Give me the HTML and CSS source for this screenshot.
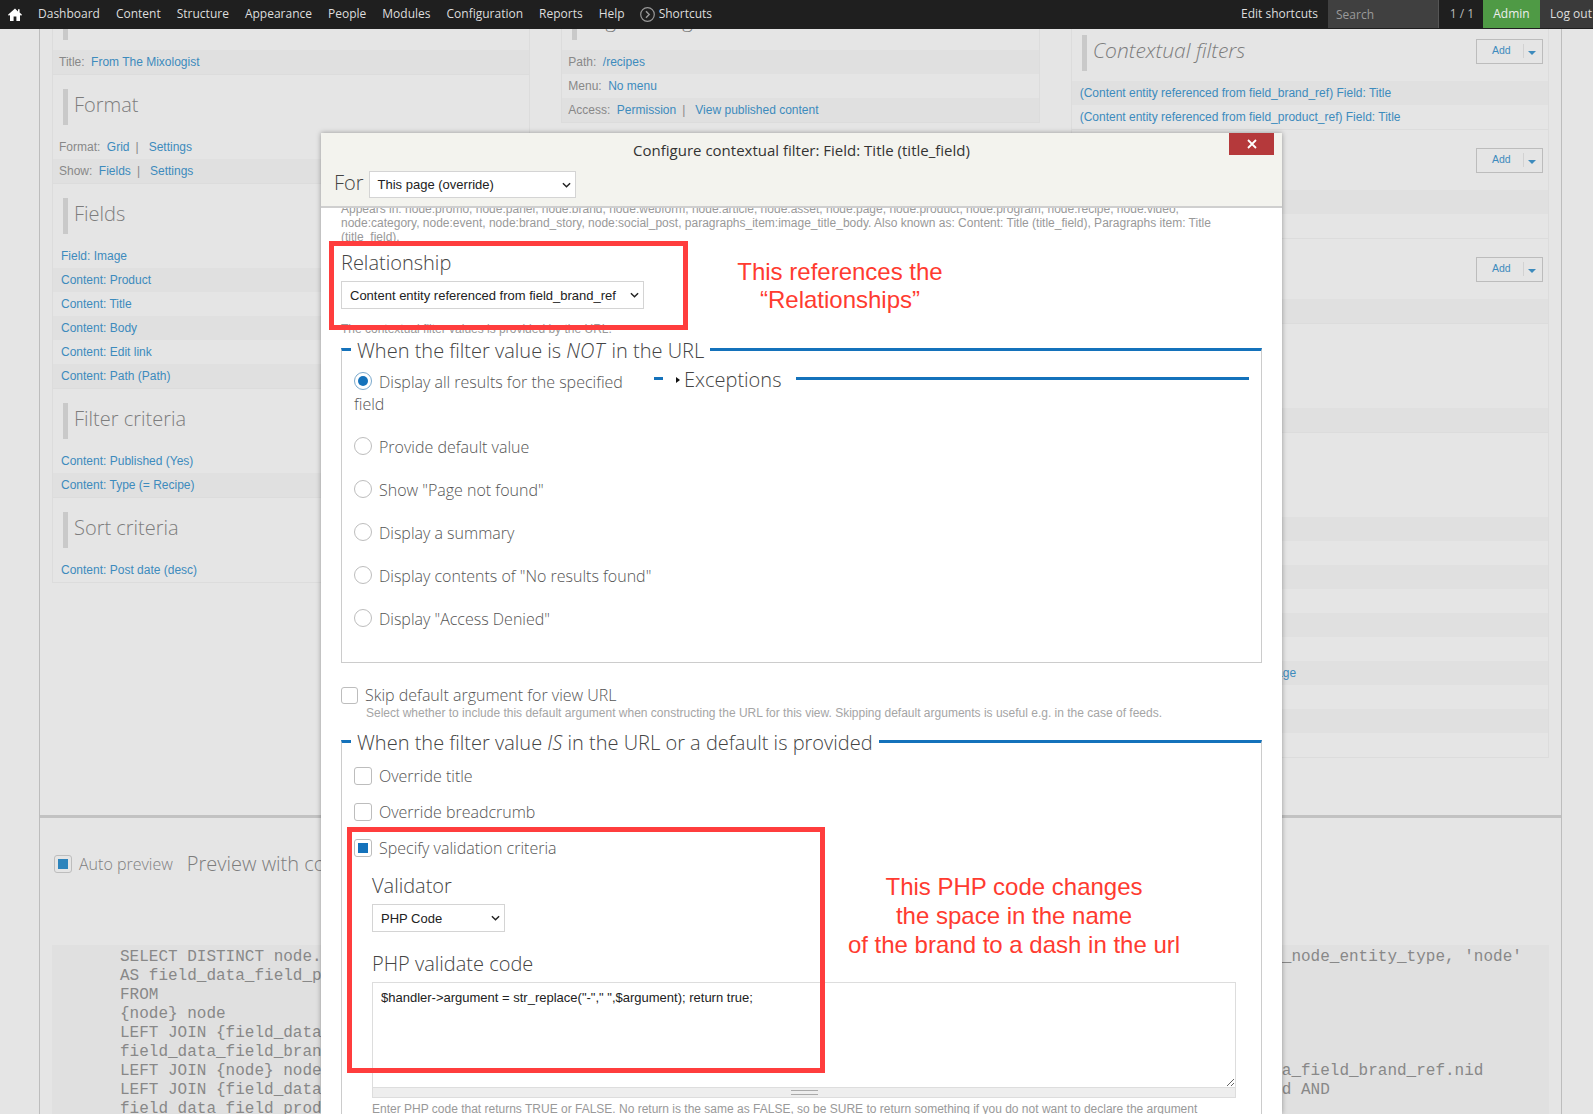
FILE: index.html
```html
<!DOCTYPE html>
<html lang="en">
<head>
<meta charset="utf-8">
<title>Configure contextual filter</title>
<link rel="stylesheet" href="styles.css">
</head>
<body>
<header class="topbar">
  <svg class="home" viewBox="0 0 14 13" width="14" height="13"><path d="M7 .5 0 6.8l.9 1L2 6.9V13h3.6V8.6h2.8V13H12V6.9l1.1.9.9-1-2.4-2.2V1.2H10v2.3z" fill="#fff"/></svg>
  <nav class="nav">
    <a>Dashboard</a><a>Content</a><a>Structure</a><a>Appearance</a><a>People</a><a>Modules</a><a>Configuration</a><a>Reports</a><a>Help</a>
    <a class="shortcuts"><svg viewBox="0 0 15 15" width="15" height="15"><circle cx="7.5" cy="7.5" r="6.8" fill="none" stroke="#999" stroke-width="1.2"/><path d="M6 4.2 9.2 7.5 6 10.8" fill="none" stroke="#999" stroke-width="1.4"/></svg>Shortcuts</a>
  </nav>
  <div class="bar-right">
    <a class="edit">Edit shortcuts</a>
    <div class="search">Search</div>
    <div class="count">1 / 1</div>
    <a class="admin">Admin</a>
    <a class="logout">Log out</a>
  </div>
</header>

<main class="frame">
  <div class="top-area">
    <div class="cols">
      <div class="col">
        <section class="sec">
          <div class="head"><h3>Title</h3></div>
          <div class="row alt"><span class="lab">Title:</span><a>From The Mixologist</a></div>
        </section>
        <section class="sec">
          <div class="head"><h3>Format</h3></div>
          <div class="row"><span class="lab">Format:</span><a>Grid</a><span class="pipe">|</span><a>Settings</a></div>
          <div class="row alt"><span class="lab">Show:</span><a>Fields</a><span class="pipe">|</span><a>Settings</a></div>
        </section>
        <section class="sec">
          <div class="head"><h3>Fields</h3></div>
          <div class="row link"><a>Field: Image</a></div>
          <div class="row link alt"><a>Content: Product</a></div>
          <div class="row link"><a>Content: Title</a></div>
          <div class="row link alt"><a>Content: Body</a></div>
          <div class="row link"><a>Content: Edit link</a></div>
          <div class="row link alt"><a>Content: Path (Path)</a></div>
        </section>
        <section class="sec">
          <div class="head"><h3>Filter criteria</h3></div>
          <div class="row link"><a>Content: Published (Yes)</a></div>
          <div class="row link alt"><a>Content: Type (= Recipe)</a></div>
        </section>
        <section class="sec">
          <div class="head"><h3>Sort criteria</h3></div>
          <div class="row link"><a>Content: Post date (desc)</a></div>
        </section>
      </div>

      <div class="col">
        <section class="sec">
          <div class="head"><h3>Page settings</h3></div>
          <div class="row alt"><span class="lab">Path:</span><a>/recipes</a></div>
          <div class="row"><span class="lab">Menu:</span><a>No menu</a></div>
          <div class="row alt"><span class="lab">Access:</span><a>Permission</a><span class="pipe">|</span><a>View published content</a></div>
        </section>
      </div>

      <div class="col col-right">
        <section class="sec">
          <div class="head"><h3 class="ital">Contextual filters</h3><div class="add"><a>Add</a><i class="caret"></i></div></div>
          <div class="row alt"><a>(Content entity referenced from field_brand_ref) Field: Title</a></div>
          <div class="row"><a>(Content entity referenced from field_product_ref) Field: Title</a></div>
        </section>
        <section class="sec">
          <div class="head"><h3>Relationships</h3><div class="add"><a>Add</a><i class="caret"></i></div></div>
          <div class="row alt"><a>Content entity</a></div>
          <div class="row"><a>Content entity</a></div>
        </section>
        <section class="sec">
          <div class="head"><h3>No results</h3><div class="add"><a>Add</a><i class="caret"></i></div></div>
          <div class="row alt"></div>
        </section>
        <section class="sec">
          <div class="head"><h3>Exposed form</h3></div>
          <div class="row"></div>
          <div class="row alt"></div>
        </section>
        <section class="sec">
          <div class="head"><h3>Other</h3></div>
          <div class="row"></div>
          <div class="row alt"></div>
          <div class="row"></div>
          <div class="row alt"></div>
          <div class="row"></div>
          <div class="row alt"></div>
          <div class="row"></div>
          <div class="row alt"><a>Content: Related Brand's Landing Image</a></div>
          <div class="row"></div>
          <div class="row alt"></div>
          <div class="row"></div>
        </section>
      </div>
    </div>
  </div>

  <div class="preview">
    <span class="box on dim"></span>
    <span class="auto">Auto preview</span>
    <span class="prev-title">Preview with contextual filters:</span>
  </div>

  <pre class="sql">SELECT DISTINCT node.title AS node_title, node.nid AS nid, node.created AS node_created, COALESCE(field_data_field_images_node_entity_type, 'node'
AS field_data_field_product_ref_node_entity_type
FROM
{node} node
LEFT JOIN {field_data_field_brand_ref} node__brand ON node.nid = node__brand.entity_id
field_data_field_brand_ref ON node.nid = field_data_field_brand_ref.entity_id
LEFT JOIN {node} node_field_data_field_brand_ref ON field_data_field_brand_ref.field_brand_ref_target_id = node_field_data_field_brand_ref.nid
LEFT JOIN {field_data_field_product_ref} field_data_field_product_ref ON node.nid = field_data_field_product_ref.entity_id AND
field_data_field_product_ref.entity_type = 'node'</pre>
</main>

<div class="modal">
  <div class="m-head">
    <div class="m-title">Configure contextual filter: Field: Title (title_field)</div>
    <a class="close"><svg viewBox="0 0 10 10" width="10" height="10"><path d="M1 1l8 8M9 1l-8 8" stroke="#fff" stroke-width="1.8"/></svg></a>
    <div class="m-for">
      <span class="for">For</span>
      <div class="sel sel-for">This page (override)<svg class="chev" viewBox="0 0 10 6" width="9" height="6"><path d="M1 1l4 4 4-4" fill="none" stroke="#222" stroke-width="1.6"/></svg></div>
    </div>
  </div>
  <div class="m-body">
    <p class="m-desc">Appears in: node:promo, node:panel, node:brand, node:webform, node:article, node:asset, node:page, node:product, node:program, node:recipe, node:video,<br>node:category, node:event, node:brand_story, node:social_post, paragraphs_item:image_title_body. Also known as: Content: Title (title_field), Paragraphs item: Title<br>(title_field).</p>
    <div class="lbl lbl-rel">Relationship</div>
    <div class="sel sel-rel">Content entity referenced from field_brand_ref<svg class="chev" viewBox="0 0 10 6" width="9" height="6"><path d="M1 1l4 4 4-4" fill="none" stroke="#222" stroke-width="1.6"/></svg></div>
    <p class="hint">The contextual filter values is provided by the URL.</p>

    <fieldset class="fs fs-one">
      <legend>When the filter value is <em>NOT</em> in the URL</legend>
      <div class="fs-cols">
        <div class="radios">
          <div class="opt"><span class="radio on"></span>Display all results for the specified field</div>
          <div class="opt"><span class="radio"></span>Provide default value</div>
          <div class="opt"><span class="radio"></span>Show "Page not found"</div>
          <div class="opt"><span class="radio"></span>Display a summary</div>
          <div class="opt"><span class="radio"></span>Display contents of "No results found"</div>
          <div class="opt"><span class="radio"></span>Display "Access Denied"</div>
        </div>
        <div class="exc">
          <span class="tick"></span>
          <span class="tri"></span>
          <span class="exc-text">Exceptions</span>
          <span class="exc-line"></span>
        </div>
      </div>
    </fieldset>

    <div class="skip"><span class="box"></span>Skip default argument for view URL</div>
    <p class="small skip-desc">Select whether to include this default argument when constructing the URL for this view. Skipping default arguments is useful e.g. in the case of feeds.</p>

    <fieldset class="fs fs-two">
      <legend>When the filter value <em>IS</em> in the URL or a default is provided</legend>
      <div class="opt2"><span class="box"></span>Override title</div>
      <div class="opt2"><span class="box"></span>Override breadcrumb</div>
      <div class="opt2"><span class="box on"></span>Specify validation criteria</div>
      <div class="indent">
        <div class="lbl lbl-val">Validator</div>
        <div class="sel sel-php">PHP Code<svg class="chev" viewBox="0 0 10 6" width="9" height="6"><path d="M1 1l4 4 4-4" fill="none" stroke="#222" stroke-width="1.6"/></svg></div>
        <div class="lbl lbl-php">PHP validate code</div>
        <textarea class="code" spellcheck="false">$handler-&gt;argument = str_replace("-"," ",$argument); return true;</textarea>
        <div class="grip"><i></i></div>
        <p class="small code-desc">Enter PHP code that returns TRUE or FALSE. No return is the same as FALSE, so be SURE to return something if you do not want to declare the argument</p>
      </div>
    </fieldset>
  </div>
</div>

<div class="redbox rb-one"></div>
<div class="redbox rb-two"></div>
<div class="note note-one">This references the<br>“Relationships”</div>
<div class="note note-two">This PHP code changes<br>the space in the name<br>of the brand to a dash in the url</div>
</body>
</html>
```

FILE: styles.css
```css
* { box-sizing: border-box; }
html, body { margin: 0; height: 1114px; overflow: hidden; }
body { background: #e5e5e5; font-family: "Liberation Sans", Arial, sans-serif; font-size: 12px; color: #888; position: relative; }

/* toolbar */
.topbar { position: absolute; top: 0; left: 0; right: 0; height: 29px; background: #1f1f1f; display: flex; align-items: flex-start; padding-left: 8px; font-family: "Open Sans", sans-serif; font-size: 12px; color: #ddd; z-index: 5; overflow: hidden; }
.home { margin-top: 8px; flex: none; }
.nav { display: flex; gap: 16px; margin-left: 16px; line-height: 28px; }
.shortcuts { display: flex; align-items: center; gap: 4px; margin-left: -1px; }
.bar-right { margin-left: auto; display: flex; line-height: 28px; }
.edit { margin-right: 10px; }
.search { width: 110px; height: 28px; background: #404040; color: #9a9a9a; padding: 1px 8px 0; }
.count { width: 45px; text-align: center; border-left: 1px solid #555; height: 28px; color: #bbb; padding-left: 2px; }
.admin { width: 57px; height: 28px; background: #4f9a45; color: #eee; text-align: center; }
.logout { width: 53px; height: 28px; background: #3a3a3a; padding-left: 10px; white-space: nowrap; }

/* background page */
.frame { margin-left: 39px; width: 1523px; height: 1114px; border-left: 1px solid #bdbdbd; border-right: 1px solid #bdbdbd; overflow: hidden; }
.top-area { border-bottom: 3px solid #c2c2c2; padding: 0 12px 57px; }
.cols { display: grid; grid-template-columns: repeat(3, 1fr); column-gap: 31px; align-items: start; margin-top: -10px; }
.col { border-left: 1px solid #dcdcdc; border-right: 1px solid #dcdcdc; }
.col-right { margin-top: 31px; }
.sec { border-bottom: 1px solid #dcdcdc; }
.head { height: 60px; padding: 14px 5px 0 10px; display: flex; justify-content: space-between; align-items: flex-start; }
.head h3 { margin: 0; height: 36px; border-left: 5px solid #c9c9c9; padding-left: 6px; font: 300 20px/32px "Open Sans", sans-serif; color: #7d7d7d; }
.head h3.ital { font-style: italic; font-size: 21px; line-height: 30px; }
.add { margin-top: 4px; width: 67px; height: 25px; border: 1px solid #bcbcbc; display: flex; align-items: center; padding: 0 0 3px 15px; position: relative; font-size: 10.5px; }
.add a { color: #3d8bbd; }
.add::after { content: ""; position: absolute; left: 46px; top: 4px; height: 14px; border-left: 1px solid #d2d2d2; }
.caret { position: absolute; left: 51px; top: 11px; border: 4px solid transparent; border-top: 4px solid #3d8bbd; border-bottom: 0; }
.row { height: 24px; line-height: 24px; padding-left: 6px; white-space: nowrap; }
.col-right .row { padding-left: 8px; }
.row.link { padding-left: 8px; }
.row.alt { background: #e0e0e0; }
.row a { color: #3d8bbd; }
.lab { margin-right: 6.5px; }
.pipe { margin: 0 10px 0 6px; }

.preview { height: 17px; margin: 37px 0 73px 14px; display: flex; align-items: center; }
.box { flex: none; width: 18px; height: 18px; border: 1px solid #bdbdbd; border-radius: 3px; display: inline-block; position: relative; background: #fff; vertical-align: middle; }
.box.on::after { content: ""; position: absolute; left: 3px; top: 3px; width: 10px; height: 10px; background: #1472bb; }
.box.dim { background: #e5e5e5; }
.box.dim::after { background: #2d84bc; }
.auto { margin-left: 7px; font: 300 16px "Open Sans", sans-serif; color: #808080; }
.prev-title { margin-left: 14px; font: 300 20px "Open Sans", sans-serif; color: #7d7d7d; white-space: nowrap; }
.sql { margin: 0 12px; padding: 3px 0 0 68px; background: #e0e0e0; font: 16px/19px "Liberation Mono", monospace; color: #888; height: 200px; overflow: hidden; }

/* modal */
.modal { position: absolute; left: 321px; top: 133px; width: 961px; height: 981px; background: #fff; box-shadow: 0 0 5px rgba(0,0,0,.35); overflow: hidden; z-index: 3; color: #555; }
.m-head { height: 75px; background: #f3f3ee; border-bottom: 2px solid #cfcfcf; position: relative; padding: 7px 13px 0; z-index: 1; }
.m-title { font: 15px/20px "Open Sans", sans-serif; color: #333; text-align: center; }
.close { position: absolute; top: 0; right: 8px; width: 45px; height: 22px; background: #b5393b; display: flex; align-items: center; justify-content: center; }
.m-for { display: flex; align-items: flex-start; margin-top: 11px; gap: 5px; }
.for { font: 300 20px/23px "Open Sans", sans-serif; color: #444; }
.sel { height: 28px; background: #fff; border: 1px solid #d4d4d4; display: flex; align-items: center; justify-content: space-between; padding: 0 4px 0 8px; font-size: 13px; color: #222; }
.sel-for { width: 207px; height: 27px; }
.chev { flex: none; }
.sel-rel { width: 303px; }
.sel-php { width: 133px; }
.m-body { padding: 0 20px; height: 906px; overflow: hidden; }
.m-desc { margin: -6px 0 0; font-size: 12px; line-height: 14px; color: #999; white-space: nowrap; }
.lbl { font: 300 20px/26px "Open Sans", sans-serif; color: #444; }
.lbl-rel { margin: 6px 0 5px; }
.hint { margin: 13px 0 0; font-size: 12px; line-height: 14px; color: #999; }
.fs { margin: -2px 0 0; padding: 0 12px; border: 1px solid #ccc; border-top: 3px solid #1472bb; min-width: 0; }
.fs legend { margin-left: -3px; padding: 4px 6px 0; font: 300 20px/26px "Open Sans", sans-serif; color: #444; white-space: nowrap; }
.fs-one em { padding-right: 2px; }
.fs-one { padding-bottom: 32px; }
.fs-cols { display: flex; padding-top: 7px; }
.radios { flex: none; width: 300px; }
.opt { font: 300 16px/22px "Open Sans", sans-serif; color: #555; margin-bottom: 21px; }
.opt:last-child { margin-bottom: 0; }
.radio { display: inline-block; width: 18px; height: 18px; border-radius: 50%; border: 1px solid #bdbdbd; margin-right: 7px; vertical-align: -2px; background: #fff; position: relative; }
.radio.on { border-color: #7aa9cc; }
.radio.on::after { content: ""; position: absolute; left: 3px; top: 3px; width: 10px; height: 10px; border-radius: 50%; background: #1472bb; }
.exc { flex: 1; display: flex; align-items: center; height: 26px; margin-top: -4px; }
.tick { width: 9px; height: 3px; background: #1472bb; margin-top: -3px; }
.tri { margin-left: 13px; border: 3.5px solid transparent; border-left: 4px solid #111; border-right: 0; }
.exc-text { margin-left: 4px; font: 300 20px/26px "Open Sans", sans-serif; color: #444; }
.exc-line { flex: 1; height: 3px; background: #1472bb; margin-left: 15px; margin-top: -3px; }
.skip { margin-top: 21px; display: flex; align-items: center; gap: 7px; font: 300 16px/22px "Open Sans", sans-serif; color: #555; }
.skip .box { width: 17px; height: 17px; }
.small { margin: 0; font-size: 12px; line-height: 14px; color: #a5a5a5; white-space: nowrap; }
.skip-desc { margin-left: 25px; }
.fs-two { margin-top: 6px; height: 400px; padding-top: 9px; }
.opt2 { display: flex; align-items: center; gap: 7px; font: 300 16px/22px "Open Sans", sans-serif; color: #555; margin-bottom: 14px; }
.opt2:nth-of-type(3) { margin-bottom: 0; }
.indent { padding-left: 18px; }
.lbl-val { margin: 14px 0 5px; }
.lbl-php { margin: 19px 0 5px; }
.code { display: block; width: 864px; height: 106px; border: 1px solid #ddd; padding: 7px 8px; font: 13px/16px "Liberation Sans", Arial, sans-serif; color: #222; resize: vertical; outline: 0; background: #fff; overflow: hidden; }
.grip { width: 864px; height: 10px; background: #eee; border: 1px solid #ddd; border-top: 0; display: flex; align-items: center; justify-content: center; }
.grip i { width: 27px; height: 5px; border-top: 1px solid #aaa; border-bottom: 1px solid #aaa; }
.code-desc { margin-top: 4px; color: #999; }

/* annotations */
.redbox { position: absolute; border: 5px solid #ff3d3d; z-index: 4; }
.rb-one { left: 329px; top: 241px; width: 359px; height: 89px; }
.rb-two { left: 347px; top: 827px; width: 478px; height: 246px; }
.note { position: absolute; z-index: 4; color: #ff3b30; font-size: 24px; line-height: 29px; text-align: center; white-space: nowrap; transform: translateX(-50%); }
.note-one { left: 840px; top: 258px; line-height: 28px; }
.note-two { left: 1014px; top: 872px; }
```
